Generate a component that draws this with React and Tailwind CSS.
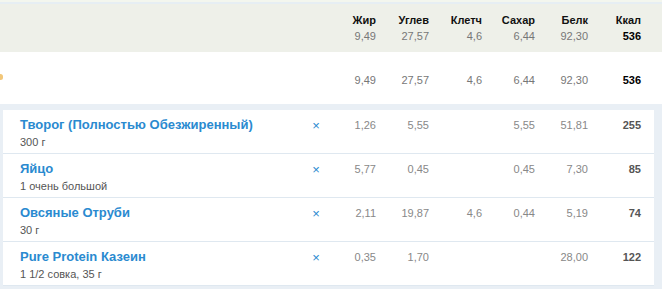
const cols=["Жир","Углев","Клетч","Сахар","Белк","Ккал"];
const totals=["9,49","27,57","4,6","6,44","92,30","536"];

const foods=[
  {name:"Творог (Полностью Обезжиренный)", amount:"300 г", vals:["1,26","5,55","","5,55","51,81","255"]},
  {name:"Яйцо", amount:"1 очень большой", vals:["5,77","0,45","","0,45","7,30","85"]},
  {name:"Овсяные Отруби", amount:"30 г", vals:["2,11","19,87","4,6","0,44","5,19","74"]},
  {name:"Pure Protein Казеин", amount:"1 1/2 совка, 35 г", vals:["0,35","1,70","","","28,00","122"]},
];

function Nums({vals,dark}){
  return vals.map((v,i)=>(
    <div key={i} className={`w-[53px] text-right ${i===5 ? (dark?"font-bold text-black":"font-bold text-[#555]") : (dark?"text-[#777]":"text-[#888]")}`}>{v}</div>
  ));
}

export default function App(){
  return (
    <div className="w-[662px] h-[289px] overflow-hidden bg-white text-[11px] leading-none" style={{fontFamily:'"Liberation Sans", Arial, sans-serif'}}>
      <div className="h-[2px] bg-[#f3f6ee]"></div>
      <div className="h-[2px] bg-[#e6eef3]"></div>
      {/* header */}
      <div className="h-[48px] bg-[#eef0e9] flex pt-[11px]">
        <div className="w-[323px]"></div>
        <div className="flex flex-col">
          <div className="flex font-bold text-[#111]">
            {cols.map(c=><div key={c} className="w-[53px] text-right">{c}</div>)}
          </div>
          <div className="flex mt-[5px]">
            <Nums vals={totals} dark />
          </div>
        </div>
      </div>
      {/* totals */}
      <div className="h-[52px] flex items-center relative">
        <div className="absolute left-[-2px] top-[22px] w-[5px] h-[6px] rounded-full bg-[#f2c77a]"></div>
        <div className="w-[323px]"></div>
        <div className="flex pt-[4px]"><Nums vals={totals} dark /></div>
      </div>
      {/* food list */}
      <div className="bg-[#e9eff5] pt-[6px] px-[3px] pr-[8px] h-[300px]">
        <div className="bg-white">
          {foods.map(f=>(
            <div key={f.name} className="h-[44px] border-b border-[#dfe8f0] flex">
              <div className="w-[303px] pl-[17px] pt-[8px]">
                <div className="text-[13px] font-bold text-[#2a8ad0]">{f.name}</div>
                <div className="text-[11px] text-[#555] mt-[6px]">{f.amount}</div>
              </div>
              <div className="w-[20px] pt-[9px] text-[13px] text-[#2a8ad0] text-center">×</div>
              <div className="flex pt-[10px] -ml-[3px]"><Nums vals={f.vals} /></div>
            </div>
          ))}
        </div>
      </div>
    </div>
  );
}
